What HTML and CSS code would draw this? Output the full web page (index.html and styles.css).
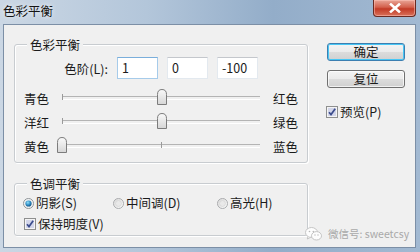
FILE: index.html
```html
<!DOCTYPE html>
<html lang="zh-CN">
<head>
<meta charset="utf-8">
<title>色彩平衡</title>
<link rel="stylesheet" href="styles.css">
</head>
<body>
<div class="window">
  <div class="titlebar">
    <span class="title">色彩平衡</span>
    <span class="close">
      <svg width="14" height="10" viewBox="0 0 14 10"><path d="M3 1.5 L11 8.5 M11 1.5 L3 8.5" stroke="#fff" stroke-width="2.6" stroke-linecap="square"/></svg>
    </span>
  </div>
  <div class="client">
    <div class="main">
      <div class="group g1">
        <span class="legend">色彩平衡</span>
        <div class="levels">
          <span class="lvl-label">色阶(L):</span>
          <span class="field focus">1</span>
          <span class="field">0</span>
          <span class="field">-100</span>
        </div>
        <div class="slider-row first">
          <span class="lab">青色</span>
          <span class="track"><i class="tick t0"></i><i class="tick t50"></i><span class="thumb" style="left:95px"><svg width="10" height="16" viewBox="0 0 10 16"><defs><linearGradient id="tg1" x1="0" y1="0" x2="0" y2="1"><stop offset="0" stop-color="#fafafa"/><stop offset="1" stop-color="#d6d6d6"/></linearGradient></defs><path d="M0.5 15.5 V5.5 Q0.5 0.5 5 0.5 Q9.5 0.5 9.5 5.5 V15.5 Z" fill="url(#tg1)" stroke="#7c7c7c"/></svg></span></span>
          <span class="rlab">红色</span>
        </div>
        <div class="slider-row">
          <span class="lab">洋红</span>
          <span class="track"><i class="tick t0"></i><i class="tick t50"></i><span class="thumb" style="left:95px"><svg width="10" height="16" viewBox="0 0 10 16"><defs><linearGradient id="tg2" x1="0" y1="0" x2="0" y2="1"><stop offset="0" stop-color="#fafafa"/><stop offset="1" stop-color="#d6d6d6"/></linearGradient></defs><path d="M0.5 15.5 V5.5 Q0.5 0.5 5 0.5 Q9.5 0.5 9.5 5.5 V15.5 Z" fill="url(#tg2)" stroke="#7c7c7c"/></svg></span></span>
          <span class="rlab">绿色</span>
        </div>
        <div class="slider-row">
          <span class="lab">黄色</span>
          <span class="track"><i class="tick t0"></i><i class="tick t50"></i><span class="thumb" style="left:-5px"><svg width="10" height="16" viewBox="0 0 10 16"><defs><linearGradient id="tg3" x1="0" y1="0" x2="0" y2="1"><stop offset="0" stop-color="#fafafa"/><stop offset="1" stop-color="#d6d6d6"/></linearGradient></defs><path d="M0.5 15.5 V5.5 Q0.5 0.5 5 0.5 Q9.5 0.5 9.5 5.5 V15.5 Z" fill="url(#tg3)" stroke="#7c7c7c"/></svg></span></span>
          <span class="rlab">蓝色</span>
        </div>
      </div>
      <div class="group g2">
        <span class="legend">色调平衡</span>
        <div class="opts">
          <span class="opt">
            <svg width="11" height="11" viewBox="0 0 12 12"><defs><radialGradient id="rd" cx="0.4" cy="0.35" r="0.7"><stop offset="0" stop-color="#8fe0fb"/><stop offset="0.6" stop-color="#2a86bf"/><stop offset="1" stop-color="#0f4a78"/></radialGradient></defs><circle cx="6" cy="6" r="5.5" fill="#eef0f2" stroke="#8a8f93"/><circle cx="6" cy="6" r="3.4" fill="url(#rd)"/></svg>
            <span>阴影(S)</span>
          </span>
          <span class="opt">
            <svg width="11" height="11" viewBox="0 0 12 12"><defs><linearGradient id="ru1" x1="0" y1="0" x2="1" y2="1"><stop offset="0" stop-color="#d8d8d8"/><stop offset="1" stop-color="#fbfbfb"/></linearGradient></defs><circle cx="6" cy="6" r="5.5" fill="url(#ru1)" stroke="#a6a9ab"/><circle cx="6" cy="6" r="3.2" fill="#e9e9e9" stroke="#d0d0d0" stroke-width="0.6"/></svg>
            <span>中间调(D)</span>
          </span>
          <span class="opt">
            <svg width="11" height="11" viewBox="0 0 12 12"><defs><linearGradient id="ru2" x1="0" y1="0" x2="1" y2="1"><stop offset="0" stop-color="#d8d8d8"/><stop offset="1" stop-color="#fbfbfb"/></linearGradient></defs><circle cx="6" cy="6" r="5.5" fill="url(#ru2)" stroke="#a6a9ab"/><circle cx="6" cy="6" r="3.2" fill="#e9e9e9" stroke="#d0d0d0" stroke-width="0.6"/></svg>
            <span>高光(H)</span>
          </span>
        </div>
        <div class="chk-row">
          <svg class="cb" width="12" height="12" viewBox="0 0 12 12"><rect x="0.5" y="0.5" width="11" height="11" fill="#f4f4f4" stroke="#8e8f8f"/><rect x="2" y="2" width="8" height="8" fill="#d3d6ea"/><path d="M3 6.2 L5 8.6 L9.2 2.8" fill="none" stroke="#3b4c8c" stroke-width="1.7"/></svg>
          <span>保持明度(V)</span>
        </div>
      </div>
    </div>
    <div class="side">
      <span class="btn default">确定</span>
      <span class="btn">复位</span>
      <div class="chk-row side-chk">
        <svg class="cb" width="12" height="12" viewBox="0 0 12 12"><rect x="0.5" y="0.5" width="11" height="11" fill="#f4f4f4" stroke="#8e8f8f"/><rect x="2" y="2" width="8" height="8" fill="#d3d6ea"/><path d="M3 6.2 L5 8.6 L9.2 2.8" fill="none" stroke="#3b4c8c" stroke-width="1.7"/></svg>
        <span>预览(P)</span>
      </div>
    </div>
  </div>
  <div class="watermark">
    <svg width="17" height="14" viewBox="0 0 17 14"><ellipse cx="6.5" cy="5.5" rx="6" ry="5" fill="#fdfdfd" stroke="#c4c4c4"/><path d="M3 9.5 L2.3 12 L5.5 10.3" fill="#fdfdfd" stroke="#c4c4c4"/><ellipse cx="11.5" cy="8.8" rx="5" ry="4.2" fill="#fdfdfd" stroke="#c4c4c4"/><circle cx="4.5" cy="4.5" r="0.8" fill="#b8b8b8"/><circle cx="8.3" cy="4.5" r="0.8" fill="#b8b8b8"/><circle cx="10" cy="8" r="0.7" fill="#b8b8b8"/><circle cx="13" cy="8" r="0.7" fill="#b8b8b8"/></svg>
    <span>微信号: sweetcsy</span>
  </div>
</div>
</body>
</html>
```
FILE: styles.css
```css
* { box-sizing: border-box; }
html, body { margin: 0; padding: 0; }
body {
  width: 420px;
  height: 252px;
  overflow: hidden;
  font-family: "Noto Sans CJK SC", "Noto Sans", sans-serif;
  font-size: 12.5px;
  color: #1b1b1b;
}
.window {
  position: relative;
  width: 420px;
  height: 252px;
  display: flex;
  flex-direction: column;
  padding: 0 4px 4px 3px;
  background: linear-gradient(to right, #cbd7e4 0%, #b3c6da 35%, #93adc9 65%, #a2b9d2 100%);
}
.titlebar {
  height: 24px;
  display: flex;
  align-items: flex-start;
}
.title {
  margin: 3px 0 0 0;
  line-height: 16px;
  font-size: 12.5px;
  color: #141414;
  text-shadow: 0 0 5px rgba(255, 255, 255, 0.9);
}
.close {
  margin-left: auto;
  width: 43px;
  height: 17px;
  display: flex;
  align-items: center;
  justify-content: center;
  border: 1px solid #6a2a22;
  border-top: none;
  border-radius: 0 0 4px 4px;
  background: linear-gradient(to bottom, #e9a597 0%, #d3604c 45%, #c23a26 55%, #d9715a 100%);
  box-shadow: inset 0 0 0 1px rgba(255, 200, 190, 0.5);
}
.client {
  flex: 1;
  display: flex;
  background: #f0f0f0;
  border: 1px solid #7c8fa6;
}
.main {
  padding-left: 10px;
}
.group {
  width: 294px;
  border: 1px solid #c8ccd0;
  border-radius: 3px;
  box-shadow: 1px 1px 0 #fff, inset 1px 1px 0 #fff;
}
.g1 {
  margin-top: 19px;
  height: 119px;
}
.g2 {
  margin-top: 20px;
  height: 53px;
}
.legend {
  display: block;
  width: max-content;
  height: 15px;
  line-height: 15px;
  margin: -8px 0 0 12px;
  padding: 0 3px;
  background: #f0f0f0;
}
.levels {
  display: flex;
  align-items: center;
  gap: 9px;
  height: 22px;
  margin: 5px 0 0 48px;
}
.lvl-label {
  width: 45px;
  text-align: right;
  white-space: nowrap;
}
.field {
  width: 41px;
  height: 22px;
  line-height: 20px;
  padding-left: 4px;
  background: #fff;
  border: 1px solid #e3e9ef;
  border-top-color: #c4c7cc;
}
.field.focus {
  border-color: #a6cbea;
  border-top-color: #7aaedb;
}
.slider-row {
  display: flex;
  align-items: center;
  height: 24px;
  padding-left: 9px;
}
.slider-row.first {
  margin-top: 7px;
}
.lab {
  width: 38px;
}
.track {
  position: relative;
  width: 198px;
  height: 16px;
}
.track::before {
  content: "";
  position: absolute;
  left: 0;
  right: 0;
  top: 6px;
  height: 2px;
  border-top: 1px solid #b4b4b4;
  border-bottom: 1px solid #fff;
}
.tick {
  position: absolute;
  top: 4px;
  width: 1px;
  height: 6px;
  background: #9a9a9a;
}
.t0 { left: 0; }
.t50 { left: 99px; }
.thumb {
  position: absolute;
  top: -1px;
  width: 10px;
  height: 16px;
  display: block;
}
.thumb svg { display: block; }
.rlab {
  margin-left: 13px;
}
.opts {
  display: grid;
  grid-template-columns: 90px 104px auto;
  height: 16px;
  margin-top: 4px;
  padding-left: 8px;
}
.opt {
  display: flex;
  align-items: center;
  gap: 2px;
  line-height: 16px;
}
.chk-row {
  display: flex;
  align-items: center;
  gap: 2px;
  height: 16px;
  line-height: 16px;
  margin: 5px 0 0 9px;
}
.cb { flex: none; }
.side {
  display: flex;
  flex-direction: column;
  margin-left: 19px;
  padding-top: 18px;
}
.btn {
  display: block;
  width: 78px;
  height: 18px;
  line-height: 16px;
  text-align: center;
  border: 1px solid #707070;
  border-radius: 3px;
  background: linear-gradient(to bottom, #f4f4f4 0%, #ebebeb 48%, #dcdcdc 52%, #d0d0d0 100%);
  box-shadow: inset 0 0 0 1px rgba(255, 255, 255, 0.7);
  margin-bottom: 9px;
}
.btn.default {
  border-color: #3c7fb1;
  box-shadow: inset 0 0 0 1px #48c7f5;
}
.side-chk {
  margin: 7px 0 0 -1px;
}
.watermark {
  position: absolute;
  left: 305px;
  top: 226px;
  display: flex;
  align-items: center;
  gap: 6px;
  font-size: 10.5px;
  color: #a9a9a9;
}
.watermark svg { display: block; }
```
